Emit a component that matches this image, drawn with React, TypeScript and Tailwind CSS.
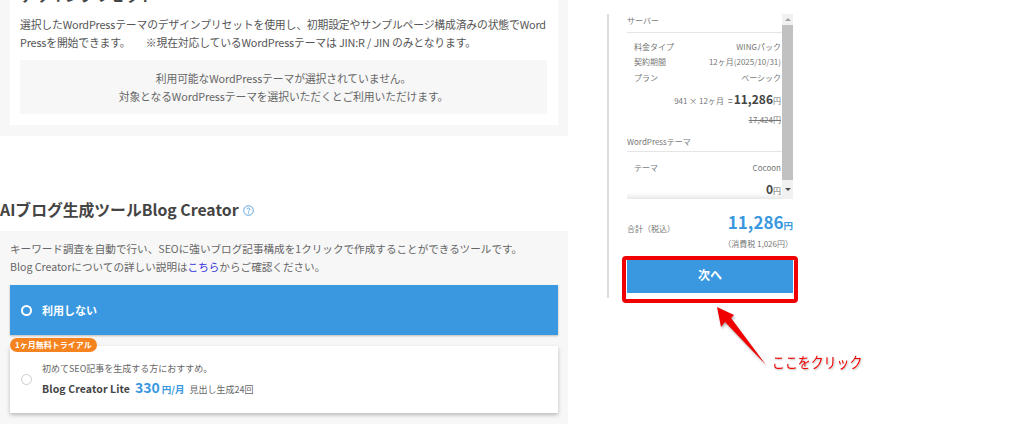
const font = { fontFamily: '"Noto Sans CJK JP", "Noto Sans", sans-serif' };

function Row({ k, v }: { k: string; v: string }) {
  return (
    <div className="flex justify-between h-[15.5px] items-center pl-[7px] pr-[1px] text-[8px] leading-none text-[#777]">
      <span>{k}</span>
      <span>{v}</span>
    </div>
  );
}

function Help({ size }: { size: number }) {
  return (
    <svg width={size} height={size} viewBox="0 0 24 24" fill="none" stroke="#4d9de0" strokeWidth="2">
      <circle cx="12" cy="12" r="10.5" />
      <path d="M9 9.5a3 3 0 1 1 4.5 2.6c-1 .6-1.5 1.2-1.5 2.4" />
      <circle cx="12" cy="17.5" r="0.6" fill="#4d9de0" />
    </svg>
  );
}

export default function App() {
  return (
    <div style={font} className="relative w-[1024px] h-[424px] overflow-hidden bg-white flex text-[#555]">
      <div className="w-[568px] shrink-0 flex flex-col">
        {/* top section */}
        <div className="h-[136px] bg-[#f7f7f7] px-[10px]">
          <div className="h-[125px] bg-white pl-[10px] pr-[11px] overflow-hidden">
            <div className="h-[4px] overflow-hidden relative">
              <div className="absolute left-0 top-[-15px] flex items-center gap-[5px] text-[15px] leading-[20px] font-bold text-[#444] whitespace-nowrap">
                デザインプリセット
                <Help size={10} />
              </div>
            </div>
            <p className="mt-[11px] text-[10.83px] leading-[18px] tracking-[-0.16px] text-[#555] whitespace-nowrap">
              選択したWordPressテーマのデザインプリセットを使用し、初期設定やサンプルページ構成済みの状態でWord
              <br />
              Pressを開始できます。　<span className="ml-[10px]">※現在対応しているWordPressテーマは JIN:R / JIN のみとなります。</span>
            </p>
            <div className="mt-[9px] h-[54px] bg-[#f7f7f7] flex flex-col justify-center text-center text-[10.8px] leading-[18px] tracking-[-0.1px] text-[#666]">
              <div>利用可能なWordPressテーマが選択されていません。</div>
              <div>対象となるWordPressテーマを選択いただくとご利用いただけます。</div>
            </div>
          </div>
        </div>

        {/* heading */}
        <div className="h-[95px] flex items-end pb-[11px] gap-[4px]">
          <h2 className="text-[15.8px] leading-[20px] font-bold text-[#444] whitespace-nowrap">AIブログ生成ツールBlog Creator</h2>
          <span className="mb-[4px]"><Help size={11} /></span>
        </div>

        {/* blog creator section */}
        <div className="flex-1 bg-[#f7f7f7] px-[10px] pt-[9px]">
          <p className="text-[10.6px] leading-[18px] text-[#666] whitespace-nowrap">
            キーワード調査を自動で行い、SEOに強いブログ記事構成を1クリックで作成することができるツールです。
            <br />
            Blog Creatorについての詳しい説明は<span className="text-[#3333dd]">こちら</span>からご確認ください。
          </p>
          <div className="mt-[9px] h-[50px] w-[548px] bg-[#3998e0] shadow-[0_1px_2px_rgba(0,0,0,0.25)] flex items-center pl-[11px] gap-[10px]">
            <span className="w-[11px] h-[11px] rounded-full border-2 border-white" />
            <span className="text-[11px] font-bold text-white">利用しない</span>
          </div>
          <div className="relative mt-[11px] h-[67px] w-[548px] bg-white shadow-[0_2px_4px_rgba(0,0,0,0.25)] flex items-center pl-[11px] gap-[10px]">
            <span className="absolute left-0 top-[-8px] h-[14px] px-[5px] rounded-full bg-[#f5831f] text-white text-[8px] leading-[14px] font-bold whitespace-nowrap">
              1ヶ月無料トライアル
            </span>
            <span className="w-[11px] h-[11px] rounded-full border border-[#ccc]" />
            <div className="mt-[2px]">
              <div className="text-[9px] leading-[14px] text-[#666]">初めてSEO記事を生成する方におすすめ。</div>
              <div className="flex items-baseline whitespace-nowrap leading-[20px] mt-[1px]">
                <span className="text-[10.5px] font-bold text-[#444] tracking-[0.1px]">Blog Creator Lite</span>
                <span className="ml-[5px] text-[14px] font-bold text-[#3998e0]">330</span>
                <span className="ml-[2px] text-[9.5px] font-bold text-[#3998e0]">円/月</span>
                <span className="ml-[5px] text-[9px] text-[#666]">見出し生成24回</span>
              </div>
            </div>
          </div>
        </div>
      </div>

      {/* sidebar */}
      <div className="ml-[39px] mt-[14px] h-[284px] w-[186px] border-l-2 border-[#ddd] pl-[18px]">
        <div className="w-[166px]">
          <div className="relative h-[185px] bg-white overflow-hidden flex">
            <div className="w-[155px] relative z-10">
              <div className="h-[19px] border-b border-[#e5e5e5] text-[8px] leading-[14px] text-[#777]">サーバー</div>
              <div className="pt-[6px]">
                <Row k="料金タイプ" v="WINGパック" />
                <Row k="契約期間" v="12ヶ月(2025/10/31)" />
                <Row k="プラン" v="ベーシック" />
              </div>
              <div className="mt-[3px] pr-[1px] flex justify-end items-baseline text-[8px] text-[#777] whitespace-nowrap leading-[20px]">
                <span>941 × 12ヶ月</span>
                <span className="ml-[4px] font-bold">=</span>
                <span className="ml-[1px] text-[12px] font-bold text-[#444]">11,286</span>円
              </div>
              <div className="pr-[1px] flex justify-end text-[8px] leading-[20px] -mt-[1px] text-[#777] line-through">17,424円</div>
              <div className="mt-[3px] h-[19px] border-b border-[#e5e5e5] text-[8px] leading-[18px] text-[#777]">WordPressテーマ</div>
              <div className="pt-[9px]">
                <Row k="テーマ" v="Cocoon" />
              </div>
              <div className="pr-[1px] flex justify-end items-baseline text-[8px] text-[#666] leading-[20px] mt-[3px]">
                <span className="text-[12px] font-bold text-[#444]">0</span>円
              </div>
            </div>
            <div className="w-[11px] bg-[#f1f1f1] flex flex-col items-center">
              <div className="h-[11px] flex items-center">
                <span className="border-x-[3px] border-x-transparent border-b-[3px] border-b-[#a3a3a3]" />
              </div>
              <div className="w-full h-[155px] bg-[#c1c1c1]" />
              <div className="flex-1 flex items-center">
                <span className="border-x-[3px] border-x-transparent border-t-[3px] border-t-[#505050]" />
              </div>
            </div>
            <div className="absolute left-0 right-[11px] bottom-0 h-[6px] bg-gradient-to-b from-white to-[#e8e8e8]" />
          </div>

          <div className="flex h-[56px] pt-[11px]">
            <div className="w-[74px] pt-[12px] text-[8px] leading-[14px] text-[#777]">合計（税込）</div>
            <div className="flex-1 text-right">
              <div className="leading-[24px] font-bold text-[#3998e0] whitespace-nowrap">
                <span className="text-[17px]">11,286</span>
                <span className="text-[9.5px]">円</span>
              </div>
              <div className="text-[8px] leading-[14px] text-[#777] whitespace-nowrap">（消費税 1,026円）</div>
            </div>
          </div>

          <div className="mt-[1px] h-[37px] bg-[#3998e0] text-white text-[12px] font-bold flex items-center justify-center">次へ</div>
        </div>
      </div>

      {/* annotation overlay */}
      <div className="absolute left-[622px] top-[256px] w-[176px] h-[47px] rounded-[4px] border-[4px] border-[#f00000] pointer-events-none" />
      <svg className="absolute left-[700px] top-[300px]" width="70" height="70" viewBox="0 0 70 70">
        <path d="M17 7 L21 27 L25 22 L66 65 L31 18 L34 15 Z" fill="#f00000" style={{ filter: "drop-shadow(1px 2px 1px rgba(0,0,0,0.3))" }} />
      </svg>
      <div
        className="absolute left-[772px] top-[351px] text-[15px] leading-[22px] text-[#f00000] whitespace-nowrap scale-x-[0.86] origin-left"
        style={{ textShadow: "1px 1px 2px rgba(0,0,0,0.3)" }}
      >
        ここをクリック
      </div>
    </div>
  );
}
